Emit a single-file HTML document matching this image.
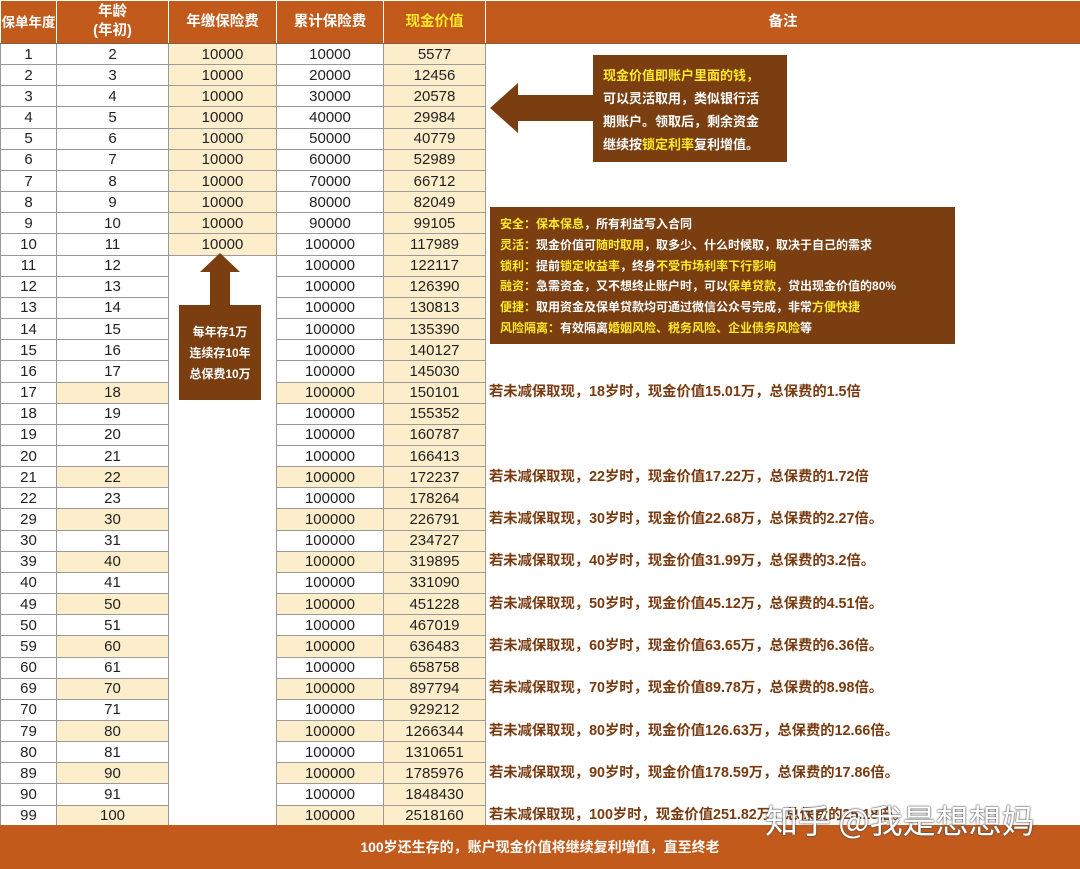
<!DOCTYPE html>
<html><head><meta charset="utf-8"><style>
*{margin:0;padding:0;box-sizing:border-box}
body{width:1080px;height:869px;background:#fff;font-family:"Liberation Sans","Noto Sans CJK SC",sans-serif;position:relative;overflow:hidden}
table{position:absolute;left:0;top:0;width:1080px;border-collapse:collapse;table-layout:fixed}
td{height:21.17px;text-align:center;font-size:15px;color:#222;border:1px solid #9a9a9a;padding:0;line-height:19px;white-space:nowrap;overflow:hidden}
th{height:43px;background:#c25a1c;color:#fff;font-size:14.5px;font-weight:bold;border:1px solid #fff;border-bottom:1px solid #8a5a3a;line-height:19px;white-space:nowrap;overflow:hidden;padding:0}
th.y{color:#ffe92a}
.c{background:#fdeecb}
td.n{border:none;border-left:1px solid #9a9a9a;border-right:1px solid #9a9a9a}
td.r{border:none;border-right:1px solid #c25a1c;text-align:left;color:#7a3a10;font-weight:bold;font-size:14.3px;padding-left:3px;overflow:visible}
.foot{position:absolute;left:0;top:825px;width:1080px;height:44px;background:#c25a1c;color:#fff;font-weight:bold;font-size:14px;text-align:center;line-height:44px}
.box{position:absolute;background:#7a3e10;color:#fff;font-weight:bold}
.yl{color:#ffe92a}
.wm{position:absolute;left:765px;top:795px;font-size:33px;color:#fff;text-shadow:0 0 2px #444,0 0 1px #444;font-family:"Noto Sans CJK SC",sans-serif}
</style></head><body>
<table>
<colgroup><col style="width:56px"><col style="width:112px"><col style="width:108px"><col style="width:107px"><col style="width:102px"><col style="width:595px"></colgroup>
<tr><th style="font-size:13.5px">保单年度</th><th>年龄<br>(年初)</th><th>年缴保险费</th><th>累计保险费</th><th class="y">现金价值</th><th>备注</th></tr>
<tr><td>1</td><td>2</td><td class="c">10000</td><td>10000</td><td class="c">5577</td><td class="r"></td></tr>
<tr><td>2</td><td>3</td><td class="c">10000</td><td>20000</td><td class="c">12456</td><td class="r"></td></tr>
<tr><td>3</td><td>4</td><td class="c">10000</td><td>30000</td><td class="c">20578</td><td class="r"></td></tr>
<tr><td>4</td><td>5</td><td class="c">10000</td><td>40000</td><td class="c">29984</td><td class="r"></td></tr>
<tr><td>5</td><td>6</td><td class="c">10000</td><td>50000</td><td class="c">40779</td><td class="r"></td></tr>
<tr><td>6</td><td>7</td><td class="c">10000</td><td>60000</td><td class="c">52989</td><td class="r"></td></tr>
<tr><td>7</td><td>8</td><td class="c">10000</td><td>70000</td><td class="c">66712</td><td class="r"></td></tr>
<tr><td>8</td><td>9</td><td class="c">10000</td><td>80000</td><td class="c">82049</td><td class="r"></td></tr>
<tr><td>9</td><td>10</td><td class="c">10000</td><td>90000</td><td class="c">99105</td><td class="r"></td></tr>
<tr><td>10</td><td>11</td><td class="c">10000</td><td>100000</td><td class="c">117989</td><td class="r"></td></tr>
<tr><td>11</td><td>12</td><td class="n"></td><td>100000</td><td class="c">122117</td><td class="r"></td></tr>
<tr><td>12</td><td>13</td><td class="n"></td><td>100000</td><td class="c">126390</td><td class="r"></td></tr>
<tr><td>13</td><td>14</td><td class="n"></td><td>100000</td><td class="c">130813</td><td class="r"></td></tr>
<tr><td>14</td><td>15</td><td class="n"></td><td>100000</td><td class="c">135390</td><td class="r"></td></tr>
<tr><td>15</td><td>16</td><td class="n"></td><td>100000</td><td class="c">140127</td><td class="r"></td></tr>
<tr><td>16</td><td>17</td><td class="n"></td><td>100000</td><td class="c">145030</td><td class="r"></td></tr>
<tr><td>17</td><td class="c">18</td><td class="n"></td><td class="c">100000</td><td class="c">150101</td><td class="r">若未减保取现，18岁时，现金价值15.01万，总保费的1.5倍</td></tr>
<tr><td>18</td><td>19</td><td class="n"></td><td>100000</td><td class="c">155352</td><td class="r"></td></tr>
<tr><td>19</td><td>20</td><td class="n"></td><td>100000</td><td class="c">160787</td><td class="r"></td></tr>
<tr><td>20</td><td>21</td><td class="n"></td><td>100000</td><td class="c">166413</td><td class="r"></td></tr>
<tr><td>21</td><td class="c">22</td><td class="n"></td><td class="c">100000</td><td class="c">172237</td><td class="r">若未减保取现，22岁时，现金价值17.22万，总保费的1.72倍</td></tr>
<tr><td>22</td><td>23</td><td class="n"></td><td>100000</td><td class="c">178264</td><td class="r"></td></tr>
<tr><td>29</td><td class="c">30</td><td class="n"></td><td class="c">100000</td><td class="c">226791</td><td class="r">若未减保取现，30岁时，现金价值22.68万，总保费的2.27倍。</td></tr>
<tr><td>30</td><td>31</td><td class="n"></td><td>100000</td><td class="c">234727</td><td class="r"></td></tr>
<tr><td>39</td><td class="c">40</td><td class="n"></td><td class="c">100000</td><td class="c">319895</td><td class="r">若未减保取现，40岁时，现金价值31.99万，总保费的3.2倍。</td></tr>
<tr><td>40</td><td>41</td><td class="n"></td><td>100000</td><td class="c">331090</td><td class="r"></td></tr>
<tr><td>49</td><td class="c">50</td><td class="n"></td><td class="c">100000</td><td class="c">451228</td><td class="r">若未减保取现，50岁时，现金价值45.12万，总保费的4.51倍。</td></tr>
<tr><td>50</td><td>51</td><td class="n"></td><td>100000</td><td class="c">467019</td><td class="r"></td></tr>
<tr><td>59</td><td class="c">60</td><td class="n"></td><td class="c">100000</td><td class="c">636483</td><td class="r">若未减保取现，60岁时，现金价值63.65万，总保费的6.36倍。</td></tr>
<tr><td>60</td><td>61</td><td class="n"></td><td>100000</td><td class="c">658758</td><td class="r"></td></tr>
<tr><td>69</td><td class="c">70</td><td class="n"></td><td class="c">100000</td><td class="c">897794</td><td class="r">若未减保取现，70岁时，现金价值89.78万，总保费的8.98倍。</td></tr>
<tr><td>70</td><td>71</td><td class="n"></td><td>100000</td><td class="c">929212</td><td class="r"></td></tr>
<tr><td>79</td><td class="c">80</td><td class="n"></td><td class="c">100000</td><td class="c">1266344</td><td class="r">若未减保取现，80岁时，现金价值126.63万，总保费的12.66倍。</td></tr>
<tr><td>80</td><td>81</td><td class="n"></td><td>100000</td><td class="c">1310651</td><td class="r"></td></tr>
<tr><td>89</td><td class="c">90</td><td class="n"></td><td class="c">100000</td><td class="c">1785976</td><td class="r">若未减保取现，90岁时，现金价值178.59万，总保费的17.86倍。</td></tr>
<tr><td>90</td><td>91</td><td class="n"></td><td>100000</td><td class="c">1848430</td><td class="r"></td></tr>
<tr><td>99</td><td class="c">100</td><td class="n"></td><td class="c">100000</td><td class="c">2518160</td><td class="r">若未减保取现，100岁时，现金价值251.82万，总保费的25.18倍。</td></tr>
</table>
<div class="foot">100岁还生存的，账户现金价值将继续复利增值，直至终老</div>

<svg style="position:absolute;left:0;top:0" width="1080" height="869">
<polygon points="490,108 518,83 518,95 594,95 594,121 518,121 518,133" fill="#7a3e10"/>
<polygon points="220,253 240,272 230,272 230,306 210,306 210,272 200,272" fill="#7a3e10"/>
</svg>
<div class="box" style="left:593px;top:55px;width:194px;height:107px;font-size:13px;line-height:23px;padding:9px 0 0 10px">
<span class="yl">现金价值即账户里面的钱，</span><br>可以灵活取用，类似银行活<br>期账户。领取后，剩余资金<br>继续按<span class="yl">锁定利率</span>复利增值。</div>
<div class="box" style="left:490px;top:207px;width:465px;height:137px;font-size:12px;line-height:20.8px;padding:7px 0 0 10px">
<span class="yl">安全：保本保息</span>，所有利益写入合同<br>
<span class="yl">灵活：</span>现金价值可<span class="yl">随时取用</span>，取多少、什么时候取，取决于自己的需求<br>
<span class="yl">锁利：</span>提前<span class="yl">锁定收益率</span>，终身<span class="yl">不受市场利率下行影响</span><br>
<span class="yl">融资：</span>急需资金，又不想终止账户时，可以<span class="yl">保单贷款</span>，贷出现金价值的80%<br>
<span class="yl">便捷：</span>取用资金及保单贷款均可通过微信公众号完成，非常<span class="yl">方便快捷</span><br>
<span class="yl">风险隔离：</span>有效隔离<span class="yl">婚姻风险、税务风险、企业债务风险</span>等</div>
<div class="box" style="left:179px;top:305px;width:82px;height:95px;font-size:12px;line-height:21px;text-align:center;padding-top:17px">每年存1万<br>连续存10年<br>总保费10万</div>
<div class="wm">知乎 @我是想想妈</div>
</body></html>
